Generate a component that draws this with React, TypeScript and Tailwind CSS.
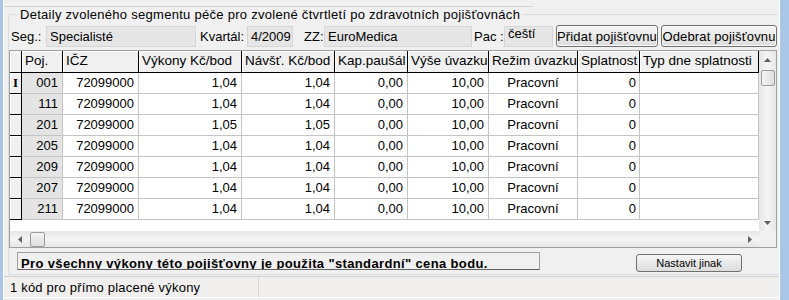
import React from 'react';

type Col = { label: string; w: string; cell: string };

const cols: Col[] = [
  { label: 'Poj.', w: 'w-[41px]', cell: 'bg-[#e4e4e4] justify-end pr-[4px]' },
  { label: 'IČZ', w: 'w-[76px]', cell: 'justify-end pr-[4px]' },
  { label: 'Výkony Kč/bod', w: 'w-[103px]', cell: 'justify-end pr-[4px]' },
  { label: 'Návšť. Kč/bod', w: 'w-[93px]', cell: 'justify-end pr-[4px]' },
  { label: 'Kap.paušál', w: 'w-[73px]', cell: 'justify-end pr-[4px]' },
  { label: 'Výše úvazku', w: 'w-[81px]', cell: 'justify-end pr-[4px]' },
  { label: 'Režim úvazku', w: 'w-[89px]', cell: 'justify-center' },
  { label: 'Splatnost', w: 'w-[62px]', cell: 'justify-end pr-[3px]' },
  { label: 'Typ dne splatnosti', w: 'w-[119px]', cell: '' },
];

const rows = [
  ['001', '72099000', '1,04', '1,04', '0,00', '10,00', 'Pracovní', '0', ''],
  ['111', '72099000', '1,04', '1,04', '0,00', '10,00', 'Pracovní', '0', ''],
  ['201', '72099000', '1,05', '1,05', '0,00', '10,00', 'Pracovní', '0', ''],
  ['205', '72099000', '1,04', '1,04', '0,00', '10,00', 'Pracovní', '0', ''],
  ['209', '72099000', '1,04', '1,04', '0,00', '10,00', 'Pracovní', '0', ''],
  ['207', '72099000', '1,04', '1,04', '0,00', '10,00', 'Pracovní', '0', ''],
  ['211', '72099000', '1,04', '1,04', '0,00', '10,00', 'Pracovní', '0', ''],
];

function Arrow({ dir }: { dir: 'up' | 'down' | 'left' | 'right' }) {
  const pts = {
    up: '0,4 3.5,0 7,4',
    down: '0,0 7,0 3.5,4',
    left: '4,0 4,7 0,3.5',
    right: '0,0 0,7 4,3.5',
  }[dir];
  const vert = dir === 'up' || dir === 'down';
  return (
    <svg width={vert ? 7 : 4} height={vert ? 4 : 7} viewBox={vert ? '0 0 7 4' : '0 0 4 7'}>
      <polygon points={pts} fill="#606060" />
    </svg>
  );
}

function Field({ w, children }: { w: string; children: React.ReactNode }) {
  return (
    <div className={`${w} h-[21px] self-end bg-[#e6e6e6] border border-[#d6d6d6] pl-[3px] flex items-center`}>
      {children}
    </div>
  );
}

function Button({ w, children }: { w: string; children: React.ReactNode }) {
  return (
    <button className={`${w} h-[22px] rounded-[3px] border border-[#707070] bg-gradient-to-b from-[#f6f6f6] to-[#dcdcdc] shadow-[inset_0_0_0_1px_#fcfcfc] flex items-center justify-center tracking-[0.15px]`}>
      {children}
    </button>
  );
}

export default function App() {
  return (
    <div className="w-[789px] h-[300px] flex bg-[#f0f0f0] text-[13px] text-black overflow-hidden font-['Liberation_Sans',Arial,sans-serif]">
      <div className="w-[3px] bg-[#a9c6e6]" />
      <div className="w-px bg-white" />
      <div className="w-[775px] flex flex-col">
        <div className="h-[7px] border-b border-[#d4d4d4] mr-[246px]" />

        <fieldset className="ml-[4px] w-[770px] border border-r-0 border-[#d5dfe5] rounded-tl-[3px] pb-[2px]">
          <legend className="ml-[8px] px-[3px] leading-[15px] tracking-[0.28px]">
            Detaily zvoleného segmentu péče pro zvolené čtvrtletí po zdravotních pojišťovnách
          </legend>

          {/* hlavička segmentu */}
          <div className="mt-[3px] h-[22px] flex items-center pl-[2px] leading-none">
            <span className="w-[35px]">Seg.:</span>
            <Field w="w-[150px]">Specialisté</Field>
            <span className="ml-[4px] w-[47px]">Kvartál:</span>
            <Field w="w-[46px]">4/2009</Field>
            <span className="ml-[11px] w-[20px]">ZZ:</span>
            <Field w="w-[148px]">EuroMedica</Field>
            <span className="ml-[2px] w-[30px]">Pac :</span>
            <Field w="w-[49px]">
              <span className="-mt-[6px]">čeští</span>
            </Field>
            <div className="ml-[3px]">
              <Button w="w-[102px]">Přidat pojišťovnu</Button>
            </div>
            <div className="ml-[3px]">
              <Button w="w-[116px]">Odebrat pojišťovnu</Button>
            </div>
          </div>

          {/* grid */}
          <div className="mt-[3px] w-[768px] border border-[#a0a0a0] flex flex-col">
            <div className="flex">
              <div className="w-[749px] bg-white flex flex-col">
                <div className="flex h-[22px]">
                  <div className="w-[12px] bg-[#f0f0f0] border-r border-b border-black shadow-[inset_1px_1px_0_#fff]" />
                  {cols.map((c) => (
                    <div
                      key={c.label}
                      className={`${c.w} bg-[#f0f0f0] border-r border-b border-black shadow-[inset_1px_1px_0_#fff] pl-[3px] flex items-center whitespace-nowrap overflow-hidden text-[13.5px]`}
                    >
                      {c.label}
                    </div>
                  ))}
                </div>
                {rows.map((r, i) => (
                  <div key={i} className="flex h-[21px]">
                    <div className="w-[12px] bg-[#f0f0f0] border-r border-b border-black shadow-[inset_1px_1px_0_#fff] flex items-center justify-center font-['Liberation_Serif',serif] font-bold text-[13px]">
                      {i === 0 ? 'I' : ''}
                    </div>
                    {cols.map((c, j) => (
                      <div
                        key={j}
                        className={`${c.w} ${c.cell} border-r border-b border-[#c4c4c4] flex items-center whitespace-nowrap overflow-hidden`}
                      >
                        {r[j]}
                      </div>
                    ))}
                  </div>
                ))}
                <div className="h-[11px]" />
              </div>

              {/* vertical scrollbar */}
              <div className="w-[17px] bg-gradient-to-r from-[#e6e6e6] via-[#f4f4f4] to-[#e6e6e6] flex flex-col items-center">
                <div className="h-[17px] flex items-center justify-center">
                  <Arrow dir="up" />
                </div>
                <div className="mt-[2px] w-[14px] h-[16px] rounded-[2px] border border-[#9c9c9c] bg-gradient-to-r from-[#f4f4f4] to-[#dedede]" />
                <div className="flex-1" />
                <div className="h-[17px] flex items-center justify-center">
                  <Arrow dir="down" />
                </div>
              </div>
            </div>

            {/* horizontal scrollbar */}
            <div className="flex h-[16px]">
              <div className="w-[749px] bg-gradient-to-b from-[#e6e6e6] via-[#f4f4f4] to-[#e6e6e6] flex items-center">
                <div className="w-[20px] flex items-center justify-center">
                  <Arrow dir="left" />
                </div>
                <div className="w-[15px] h-[15px] rounded-[2px] border border-[#9c9c9c] bg-gradient-to-b from-[#f4f4f4] to-[#dedede]" />
                <div className="flex-1" />
                <div className="w-[18px] flex items-center justify-center">
                  <Arrow dir="right" />
                </div>
              </div>
              <div className="w-[17px] bg-[#f0f0f0]" />
            </div>
          </div>

          {/* info řádek */}
          <div className="mt-[4px] h-[20px] flex items-start">
            <div className="ml-[8px] w-[523px] h-[18px] border border-[#a0a0a0] border-b-[#606060] overflow-hidden pl-[3px] pt-[3px] font-bold text-[13px] leading-[15px] tracking-[0.36px] whitespace-nowrap">
              Pro všechny výkony této pojišťovny je použita "standardní" cena bodu.
            </div>
            <button className="ml-[96px] mt-[2px] w-[106px] h-[18px] rounded-[3px] border border-[#707070] bg-gradient-to-b from-[#f6f6f6] to-[#dcdcdc] text-[11px] flex items-center justify-center">
              Nastavit jinak
            </button>
          </div>
        </fieldset>

        {/* stavový řádek */}
        <div className="mt-[1px] flex-1 border-t border-[#d0d0d0] flex flex-col">
          <div className="h-[20px] flex items-center bg-[#f1efee]">
            <div className="w-[255px] h-full pl-[6px] pt-[2px] flex items-center border-r border-[#d6d6d6] text-[13px] tracking-[0.2px]">
              1 kód pro přímo placené výkony
            </div>
          </div>
          <div className="flex-1 border-t border-white" />
        </div>
      </div>
      <div className="w-px bg-white" />
      <div className="w-[9px] bg-[#a9c6e6]" />
    </div>
  );
}
